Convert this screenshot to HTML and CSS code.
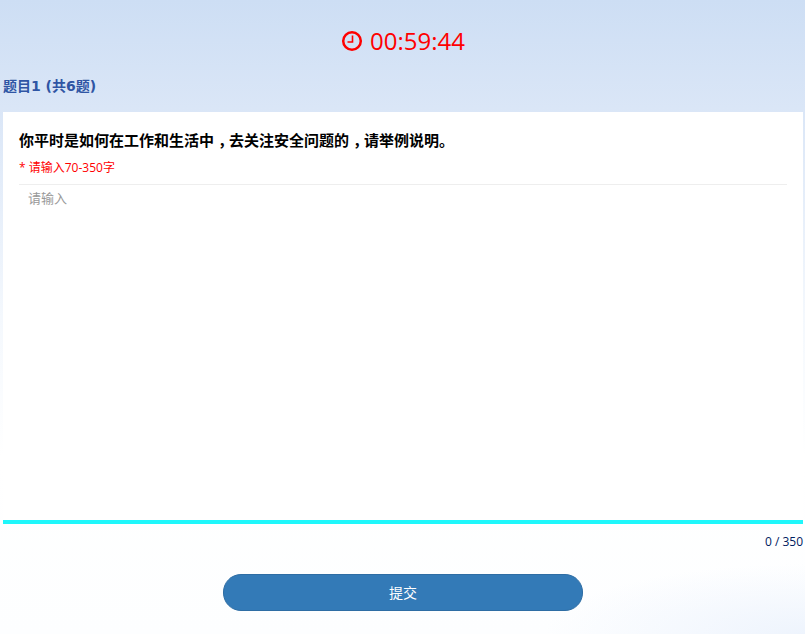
FILE: index.html
```html
<!DOCTYPE html>
<html>
<head>
    <title>Exam</title>
    <link rel="stylesheet" href="styles.css">
</head>
<body>
    <div class="timer">
        <svg class="timer-icon" viewBox="0 0 22 22">
            <circle cx="11" cy="11" r="8.8" fill="none" stroke="#f00" stroke-width="2.5"/>
            <path d="M11.5 5.5V12H6.5" fill="none" stroke="#f00" stroke-width="1.6"/>
        </svg>
        <span>00:59:44</span>
    </div>
    <div class="question-index">题目1 (共6题)</div>
    <div class="question-card">
        <div class="question-title">你平时是如何在工作和生活中<span class="mid-comma">，</span>去关注安全问题的<span class="mid-comma">，</span>请举例说明。</div>
        <div class="question-hint">* 请输入70-350字</div>
        <textarea class="answer-input" placeholder="请输入"></textarea>
    </div>
    <div class="word-count">0 / 350</div>
    <div class="submit-row">
        <button class="submit-btn">提交</button>
    </div>
</body>
</html>
```

FILE: styles.css
```css
html, body {
    height: 100%;
}
body {
    margin: 0;
    padding: 0 2px 0 3px;
    box-sizing: border-box;
    overflow: hidden;
    font-family: "Open Sans", "Noto Sans CJK SC", sans-serif;
    background: radial-gradient(ellipse 260px 70px at 100% 100%, #eef4fd 0%, rgba(238, 244, 253, 0) 100%),
        linear-gradient(180deg, #cddef4 0%, #dae6f7 17%, #f4f8fd 50%, #ffffff 72%, #fdfeff 100%);
}
.timer {
    display: flex;
    justify-content: center;
    align-items: center;
    gap: 7px;
    padding-top: 26px;
    height: 30px;
    color: #f00;
    font-size: 24px;
    line-height: 30px;
}
.timer-icon {
    width: 22px;
    height: 22px;
}
.question-index {
    margin: 21px 0 0 0;
    height: 35px;
    color: #2f55a4;
    font-family: "DejaVu Sans", "Noto Sans CJK SC", sans-serif;
    font-size: 14px;
    font-weight: bold;
    line-height: 18px;
}
.question-card {
    background: #fff;
    border-bottom: 4px solid #1ff7fb;
    height: 408px;
    padding: 0 16px;
    display: flex;
    flex-direction: column;
}
.question-title {
    margin-top: 18px;
    color: #000;
    font-size: 15px;
    font-weight: bold;
    line-height: 20px;
}
.mid-comma {
    padding-left: 4px;
    letter-spacing: -4px;
    font-family: "Noto Sans CJK KR", sans-serif;
}
.question-hint {
    margin-top: 9px;
    color: #f00;
    font-size: 12px;
    line-height: 18px;
}
.answer-input {
    flex: 1;
    margin-top: 7px;
    padding: 4px 9px;
    border: 0;
    border-top: 1px solid #eee;
    outline: 0;
    resize: none;
    font-family: inherit;
    font-size: 13px;
    line-height: 18px;
}
.answer-input::placeholder {
    color: #999;
}
.word-count {
    margin-top: 10px;
    color: #002060;
    font-size: 12px;
    line-height: 16px;
    text-align: right;
}
.submit-row {
    display: flex;
    justify-content: center;
    margin-top: 24px;
}
.submit-btn {
    width: 360px;
    height: 37px;
    padding: 0 0 2px;
    border: 1px solid #2e6da4;
    border-radius: 18px;
    background: #337ab7;
    color: #fff;
    font-family: inherit;
    font-size: 14px;
}
```
